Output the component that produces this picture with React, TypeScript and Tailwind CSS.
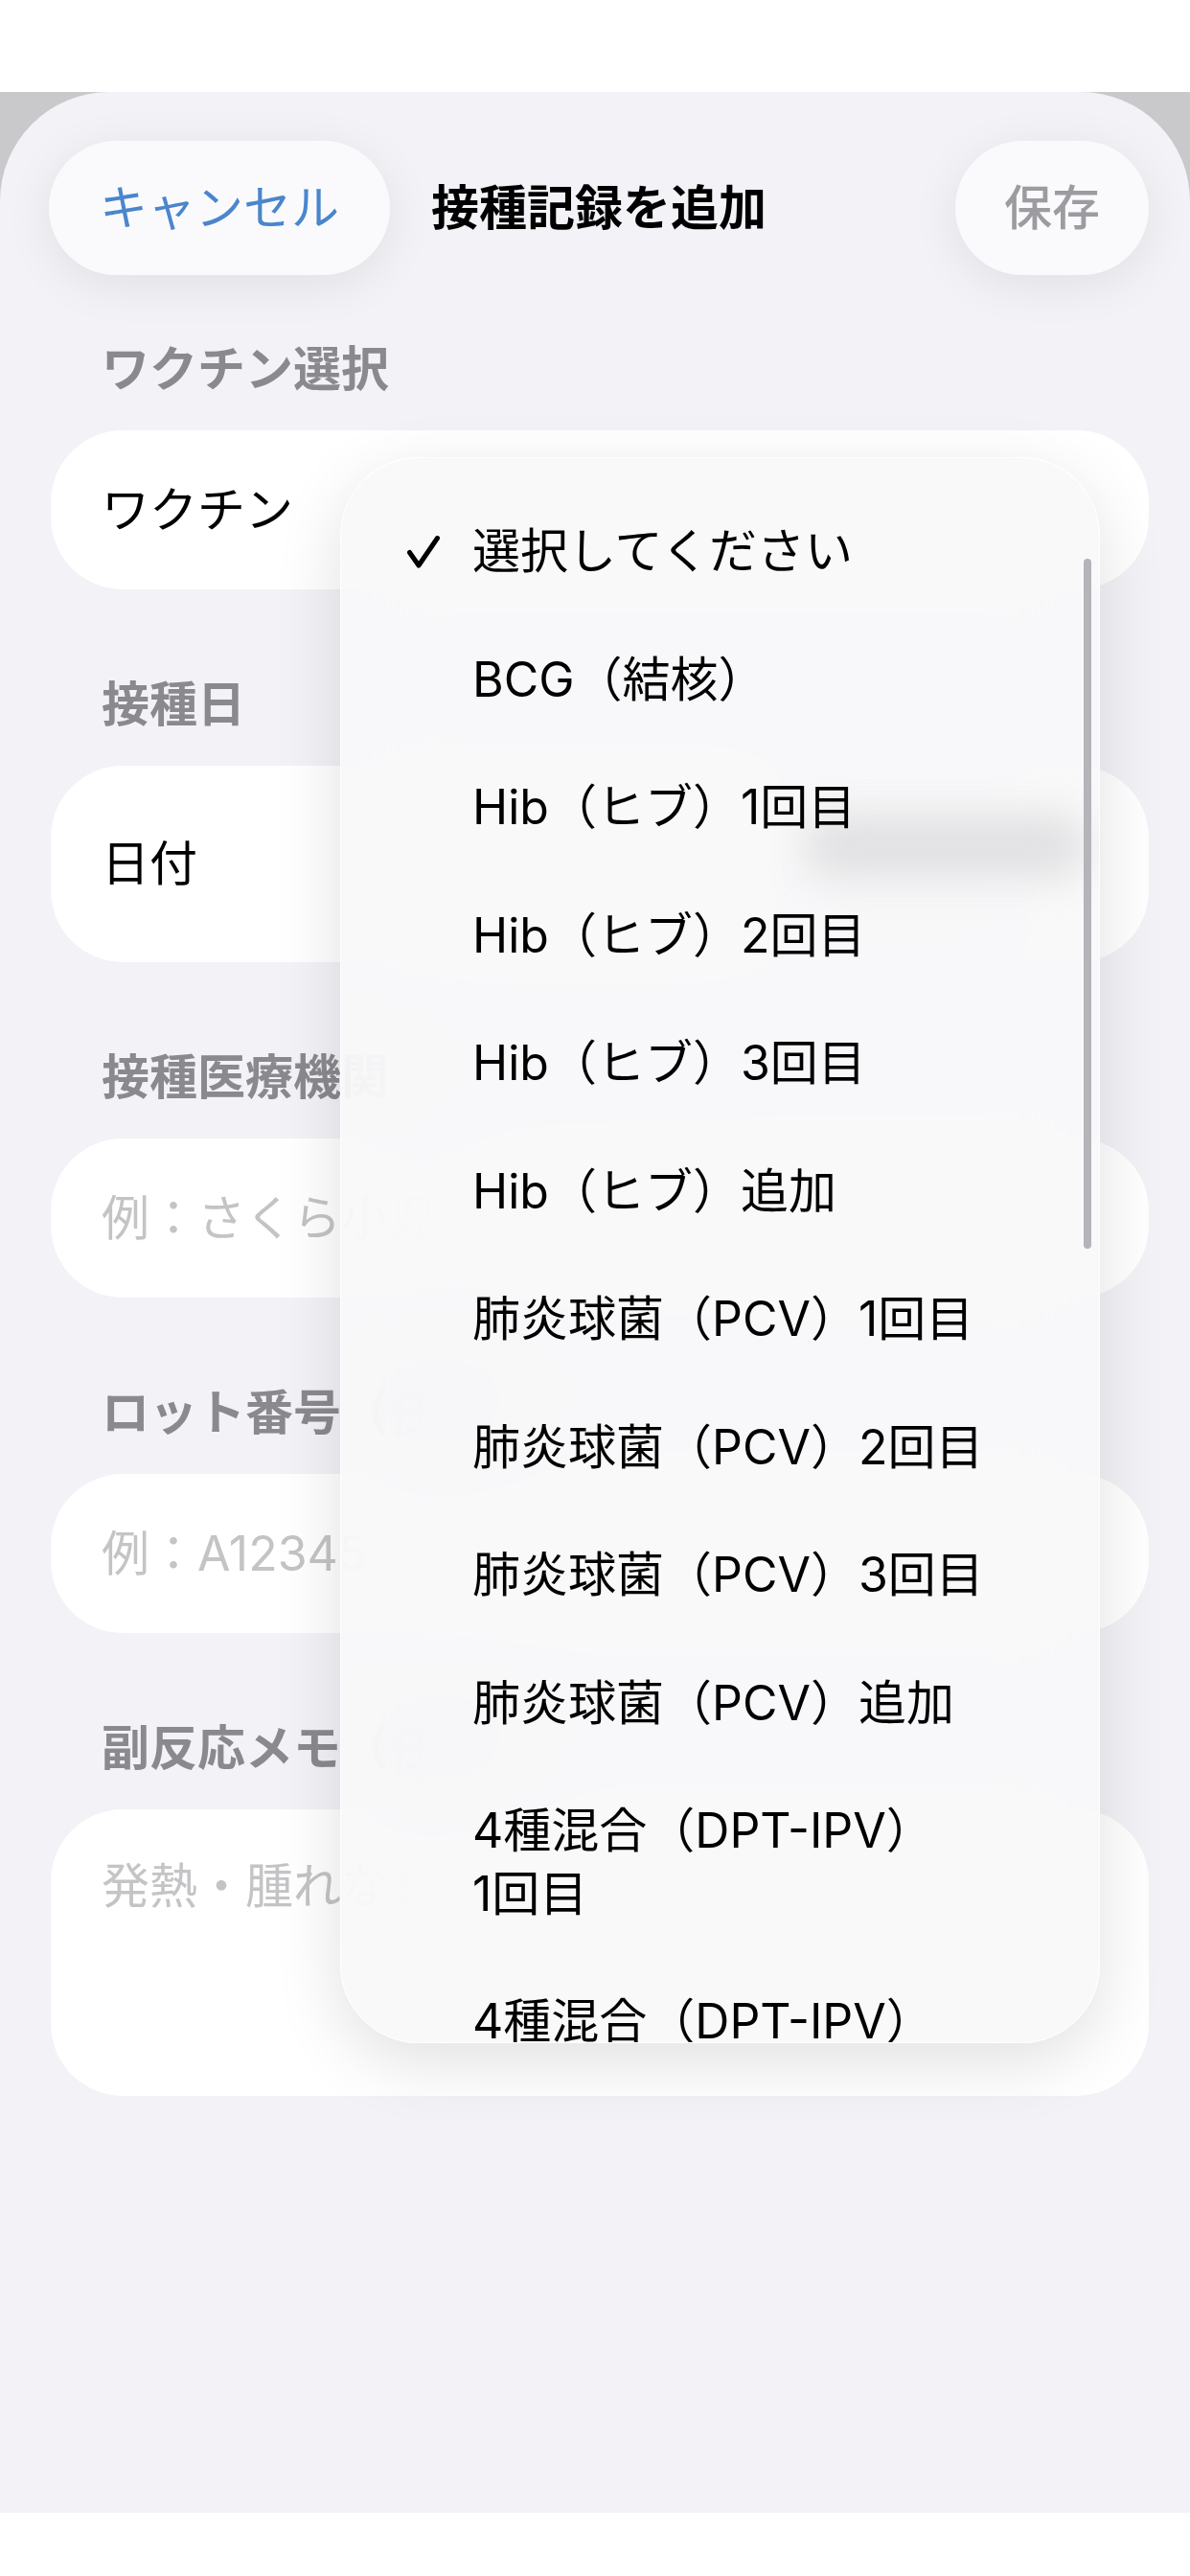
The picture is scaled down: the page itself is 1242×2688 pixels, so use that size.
import React from "react";

interface MenuItem {
  label: string;
  suffix?: string;
  checked?: boolean;
}

const items: MenuItem[] = [
  { label: "選択してください", checked: true },
  { label: "BCG（結核）" },
  { label: "Hib（ヒブ）", suffix: "1回目" },
  { label: "Hib（ヒブ）", suffix: "2回目" },
  { label: "Hib（ヒブ）", suffix: "3回目" },
  { label: "Hib（ヒブ）", suffix: "追加" },
  { label: "肺炎球菌（PCV）", suffix: "1回目" },
  { label: "肺炎球菌（PCV）", suffix: "2回目" },
  { label: "肺炎球菌（PCV）", suffix: "3回目" },
  { label: "肺炎球菌（PCV）", suffix: "追加" },
  { label: "4種混合（DPT-IPV）", suffix: "1回目" },
  { label: "4種混合（DPT-IPV）", suffix: "2回目" },
  { label: "4種混合（DPT-IPV）", suffix: "3回目" },
];

const SectionLabel = ({ children }: { children: React.ReactNode }) => (
  <div className="pl-[106px] text-[50px] leading-[60px] font-semibold text-[#8a8a8e] whitespace-nowrap">
    {children}
  </div>
);

const Check = () => (
  <svg width="34" height="34" viewBox="0 0 34 34" fill="none">
    <polyline
      points="2.5,17.5 12,31 31.5,2.5"
      stroke="#000"
      strokeWidth="5"
      strokeLinecap="round"
      strokeLinejoin="round"
    />
  </svg>
);

const VaccineMenu = () => (
  <div className="absolute left-[355px] top-[477px] w-[793px] h-[1655px] rounded-[82px] overflow-hidden border-[1.5px] border-white/90 bg-[#f8f8fa]/90 backdrop-blur-[60px] shadow-[0_20px_70px_rgba(0,0,0,0.12)]">
    {/* blurred date picker showing through the glass */}
    <div className="absolute left-[480px] top-[372px] w-[300px] h-[66px] rounded-full bg-[#e0e0e2] blur-[22px]" />
    <div className="absolute right-[8px] top-[105px] w-[8px] h-[720px] rounded-full bg-[#b4b4b9]" />
    <div className="relative pt-[31px]">
      {items.map((item, i) => (
        <div key={i} className="flex items-start pl-[69px] py-[34px] text-[50px] leading-[65.5px] text-black">
          <div className="w-[68px] h-[65.5px] flex items-center">
            {item.checked && <Check />}
          </div>
          <div className="w-[565px]">
            <span>{item.label}</span>
            {item.suffix && <span className="inline-block">{item.suffix}</span>}
          </div>
        </div>
      ))}
    </div>
  </div>
);

export default function App() {
  return (
    <div className="relative w-[1242px] h-[2688px] bg-white overflow-hidden antialiased font-[family-name:Inter,'Noto_Sans_CJK_JP',sans-serif]">
      <div className="h-[96px]" />
      <div className="bg-[#c9c9cc]">
        <div className="h-[2526px] rounded-t-[114px] bg-[#f2f2f7] pt-[51px]">
          {/* nav bar */}
          <div className="grid grid-cols-[1fr_auto_1fr] items-center pl-[51px] pr-[43px]">
            <div>
              <button className="h-[140px] px-[53px] rounded-full bg-[#fafafc] text-[50px] text-[#4a86cc] shadow-[0_10px_50px_rgba(0,0,0,0.08)]">
                キャンセル
              </button>
            </div>
            <h1 className="text-[50px] font-bold text-black">接種記録を追加</h1>
            <div className="flex justify-end">
              <button className="h-[140px] px-[51px] rounded-full bg-[#fafafc] text-[50px] font-medium text-[#9b9ba0] shadow-[0_10px_50px_rgba(0,0,0,0.08)]">
                保存
              </button>
            </div>
          </div>

          {/* form */}
          <div className="mt-[68px] pr-[43px] flex flex-col gap-[90px]">
            <div className="flex flex-col gap-[34px]">
              <SectionLabel>ワクチン選択</SectionLabel>
              <div className="ml-[53px] h-[166px] rounded-[75px] bg-white px-[53px] flex items-center text-[50px] text-black">
                ワクチン
              </div>
            </div>

            <div className="flex flex-col gap-[34px]">
              <SectionLabel>接種日</SectionLabel>
              <div className="ml-[53px] h-[205px] rounded-[75px] bg-white px-[53px] flex items-center justify-between text-[50px] text-black">
                <span>日付</span>
                <span className="mr-[50px] h-[86px] w-[300px] rounded-full bg-[#e3e3e8]" />
              </div>
            </div>

            <div className="flex flex-col gap-[34px]">
              <SectionLabel>接種医療機関</SectionLabel>
              <div className="ml-[53px] h-[166px] rounded-[75px] bg-white px-[53px] flex items-center text-[50px] text-[#c4c4c6]">
                例：さくら小児科クリニック
              </div>
            </div>

            <div className="flex flex-col gap-[34px]">
              <SectionLabel>ロット番号（任意）</SectionLabel>
              <div className="ml-[53px] h-[166px] rounded-[75px] bg-white px-[53px] flex items-center text-[50px] text-[#c4c4c6]">
                例：A12345
              </div>
            </div>

            <div className="flex flex-col gap-[34px]">
              <SectionLabel>副反応メモ（任意）</SectionLabel>
              <div className="ml-[53px] h-[299px] rounded-[75px] bg-white px-[53px] pt-[50px] text-[50px] leading-[60px] text-[#c4c4c6]">
                発熱・腫れなど
              </div>
            </div>
          </div>
        </div>
      </div>
      <div className="h-[66px] bg-white" />

      <VaccineMenu />
    </div>
  );
}
